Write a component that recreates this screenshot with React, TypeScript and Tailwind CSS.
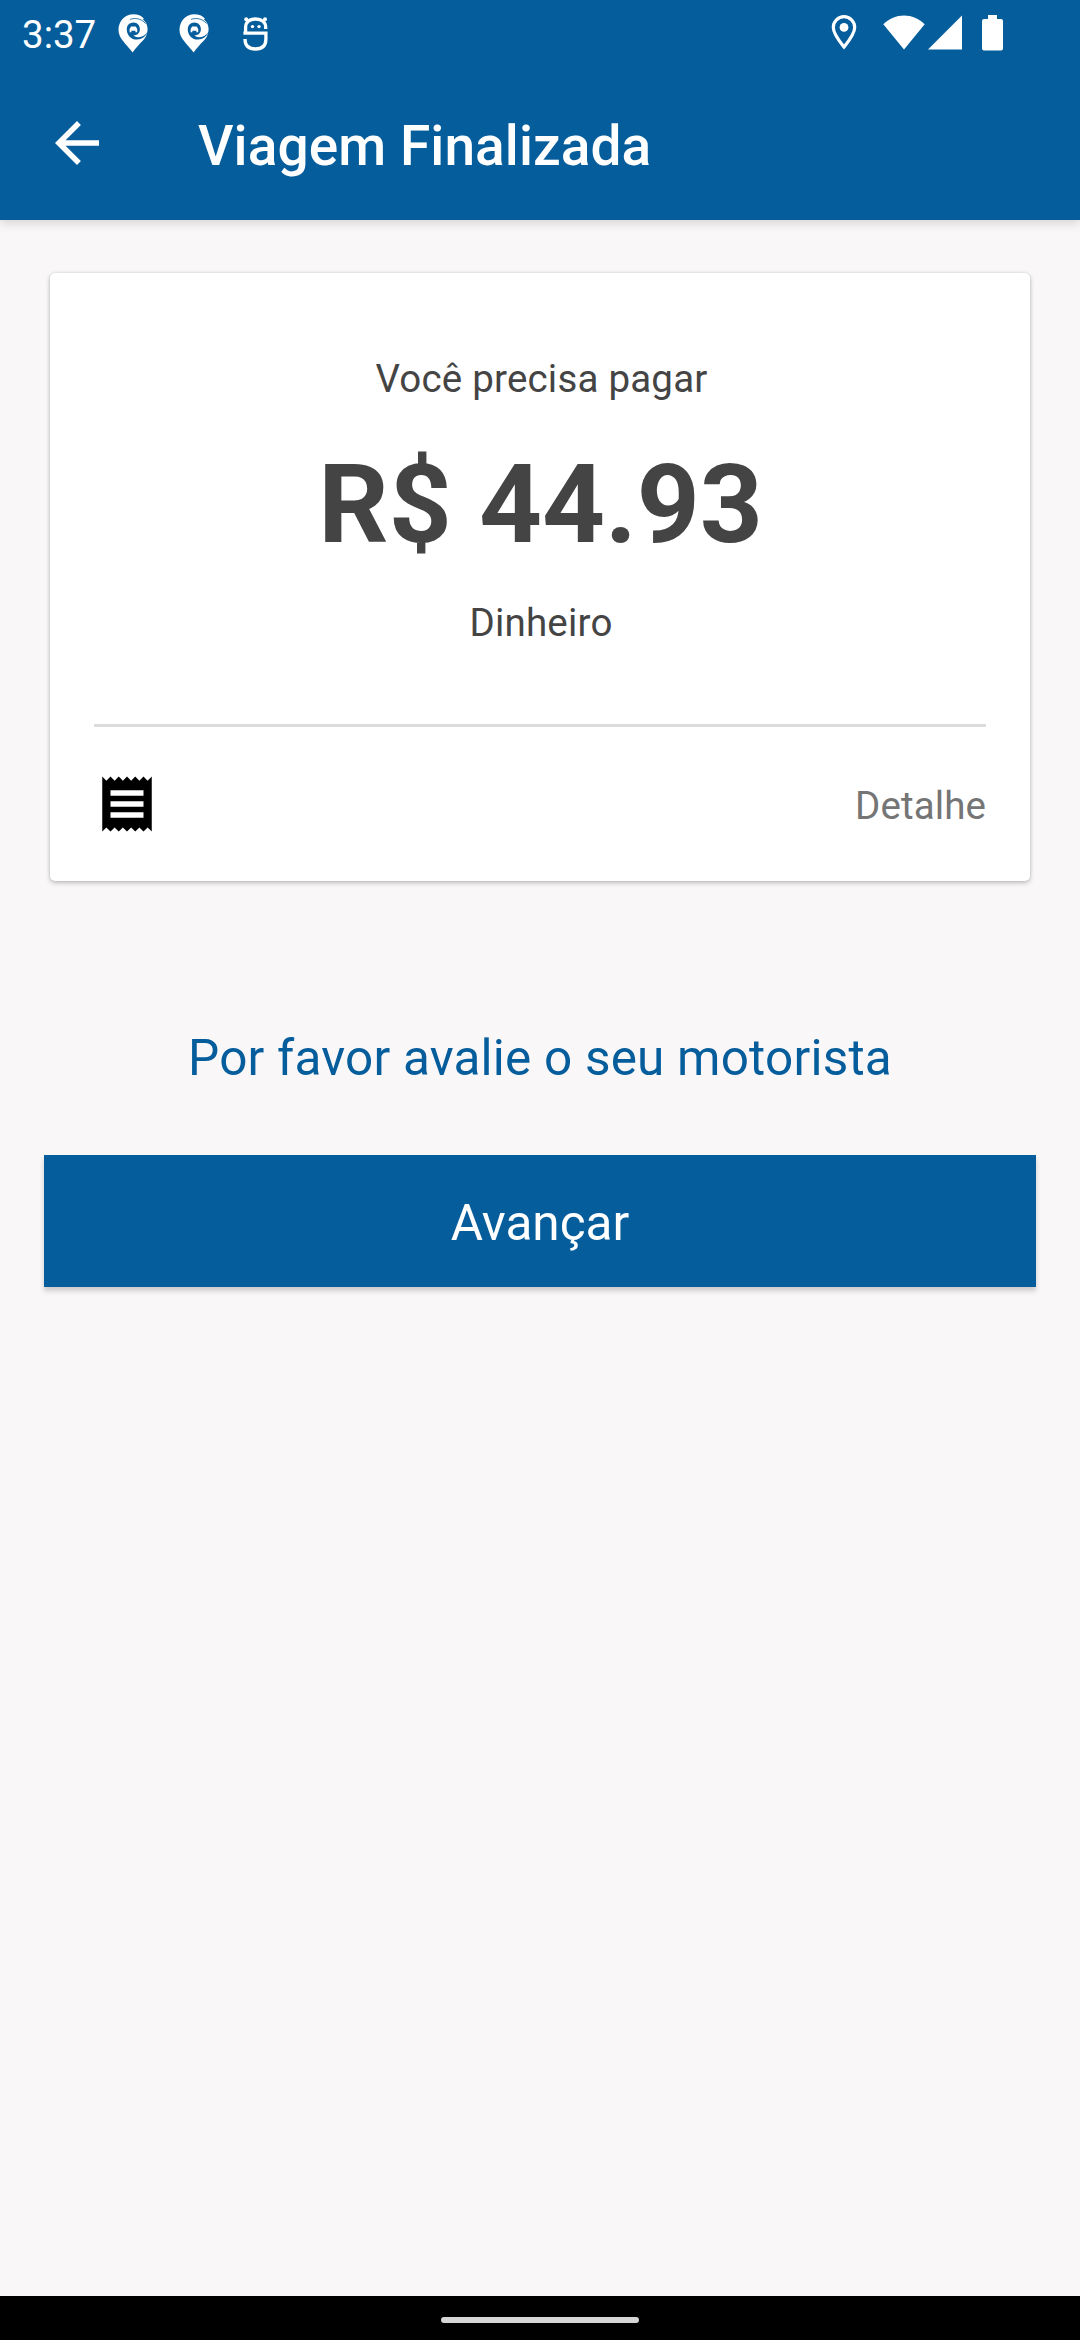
function PinIcon() {
  return (
    <svg width="30" height="39" viewBox="0 0 30 39">
      <path
        fill="#fff"
        d="M14.600 38.500C10.400 33 4 27 1.700 21.800C-1.700 13.200 2.600 4.300 9.400 1.400C15.400 -.8 22.600 .6 26 4.700L24.800 5.300C28.400 8 30.200 12.600 29.400 17.200C28.800 21.600 27 24.600 24.200 27.200C21 30.500 17.300 34.500 14.600 38.500Z"
      />
      <path
        fill="none"
        stroke="#055d9c"
        strokeWidth=".8"
        d="M12 5.400C17 3.600 23 4.400 27.600 9.400"
      />
      <path
        fill="#055d9c"
        d="M15.500 8.600C10.800 8.700 8.600 12 8.800 16C9.200 21.800 13.600 25.800 19 25.600C23.800 25.400 27.600 22.800 29.800 17.600C27 21.600 23.600 23.600 20 23.200C17.600 22.900 16.200 22.200 15.400 21.400C19.200 21.400 21.900 18.800 21.900 15.200C21.900 11.400 19 8.500 15.500 8.600Z"
      />
      <path
        fill="#fff"
        d="M11.600 18.200v-3.300l1.500-2.500h4.600l1.500 2.500v3.300h-1.800v-1.400h-4v1.400z"
      />
    </svg>
  );
}

function MascotIcon() {
  return (
    <svg width="25" height="36" viewBox="0 0 25 36" fill="none" stroke="#fff" strokeWidth="3.300">
      <path d="M22.700 13V11.500C22.700 6 19 3 12.600 3C6.200 3 2.600 6 2.600 11.500V17" />
      <path d="M.4 17.200H22.900V23C22.900 29.500 19.300 33 12.500 33C5.700 33 2 29.500 2 23" />
      <circle cx="3.200" cy="3.300" r="2" fill="#fff" stroke="none" />
      <circle cx="22" cy="3.300" r="2" fill="#fff" stroke="none" />
      <circle cx="9.500" cy="10.600" r="1.700" fill="#fff" stroke="none" />
      <circle cx="16" cy="10.600" r="1.700" fill="#fff" stroke="none" />
    </svg>
  );
}

function StatusBar() {
  return (
    <div className="flex h-[66px] items-start text-white">
      <span className="ml-[22px] mt-[10px] w-[96px] text-[38.5px] leading-[50px]">3:37</span>
      <div className="mt-[14px]">
        <PinIcon />
      </div>
      <div className="ml-[31px] mt-[14px]">
        <PinIcon />
      </div>
      <div className="ml-[34px] mt-[16px]">
        <MascotIcon />
      </div>
      <svg className="ml-auto mt-[15px]" width="26" height="35" viewBox="0 0 26 35">
        <path
          fill="none"
          stroke="#fff"
          strokeWidth="3.200"
          d="M13 32C8 25.600 2.300 18.600 2.300 12.400A10.700 10.700 0 0 1 23.700 12.400C23.700 18.600 18 25.600 13 32Z"
        />
        <circle cx="13" cy="12.400" r="4.400" fill="#fff" />
      </svg>
      <svg className="ml-[26px] mt-[15px]" width="42" height="35" viewBox="0 0 42 35">
        <path fill="#fff" d="M21 34.500L.3 9.200C12 -2.500 30 -2.500 41.700 9.200Z" />
      </svg>
      <svg className="ml-[3px] mt-[15px]" width="34" height="35" viewBox="0 0 34 35">
        <path fill="#fff" d="M0 34.500L34 .5V34.500Z" />
      </svg>
      <svg className="ml-[20px] mr-[77px] mt-[15px]" width="21" height="36" viewBox="0 0 21 36">
        <path
          fill="#fff"
          d="M6 0h9v4h4a2 2 0 0 1 2 2v27.500a2 2 0 0 1-2 2H2a2 2 0 0 1-2-2V6a2 2 0 0 1 2-2h4z"
        />
      </svg>
    </div>
  );
}

function AppBar() {
  return (
    <div className="flex h-[154px] items-center text-white">
      <svg className="ml-[44px]" width="66" height="66" viewBox="0 0 24 24" fill="#fff">
        <path d="M20 11H7.830l5.590-5.590L12 4l-8 8 8 8 1.410-1.410L7.830 13H20v-2z" />
      </svg>
      <h1 className="ml-[88px] pt-[6px] text-[55px] font-medium leading-[66px] tracking-[0.08px]">
        Viagem Finalizada
      </h1>
    </div>
  );
}

function PaymentCard() {
  return (
    <section className="mx-[50px] mt-[53px] h-[608px] rounded-[5px] bg-white px-[44px] shadow-[0_2px_5px_rgba(0,0,0,0.22),0_0_3px_rgba(0,0,0,0.12)]">
      <div className="flex h-[451px] flex-col items-center pt-[81px] text-[#444444]">
        <p className="pl-[3px] text-[38.5px] leading-[50px] tracking-[0.2px]">Você precisa pagar</p>
        <p className="mt-[36px] pl-px text-[110px] font-bold leading-[130px] tracking-[-0.1px]">
          R$ 44.93
        </p>
        <p className="mt-[28px] pl-[2px] text-[38.5px] leading-[50px] tracking-[0.2px]">Dinheiro</p>
      </div>
      <div className="h-[3px] bg-[#dcdcdc]" />
      <div className="mt-[44px] flex items-center justify-between">
        <svg width="66" height="66" viewBox="0 0 24 24">
          <path d="M18 17H6v-2h12v2zm0-4H6v-2h12v2zm0-4H6V7h12v2zM3 22l1.500-1.500L6 22l1.500-1.500L9 22l1.500-1.500L12 22l1.500-1.500L15 22l1.500-1.500L18 22l1.500-1.500L21 22V2l-1.500 1.500L18 2l-1.500 1.500L15 2l-1.500 1.500L12 2l-1.500 1.500L9 2 7.500 3.500 6 2 4.500 3.500 3 2v20z" />
        </svg>
        <span className="pt-[3px] text-[38.5px] leading-[50px] tracking-[0.1px] text-[#757575]">
          Detalhe
        </span>
      </div>
    </section>
  );
}

export default function App() {
  return (
    <div className="flex h-[2340px] w-[1080px] flex-col overflow-hidden bg-[#f9f7f8] font-['Roboto',sans-serif]">
      <header className="bg-[#055d9c] shadow-[0_3px_10px_rgba(0,0,0,0.15)]">
        <StatusBar />
        <AppBar />
      </header>
      <main className="flex-1">
        <PaymentCard />
        <p className="mt-[147px] text-center text-[49.5px] leading-[60px] tracking-[0.2px] text-[#055d9c]">
          Por favor avalie o seu motorista
        </p>
        <button className="mx-[44px] mt-[67px] block h-[132px] w-[992px] bg-[#055d9c] pt-[4px] text-[49.5px] text-white shadow-[0_4px_5px_rgba(0,0,0,0.18)]">
          Avançar
        </button>
      </main>
      <footer className="flex h-[44px] justify-center bg-black pt-[21px]">
        <div className="h-[6px] w-[198px] rounded-full bg-[#d6d6d6]" />
      </footer>
    </div>
  );
}
